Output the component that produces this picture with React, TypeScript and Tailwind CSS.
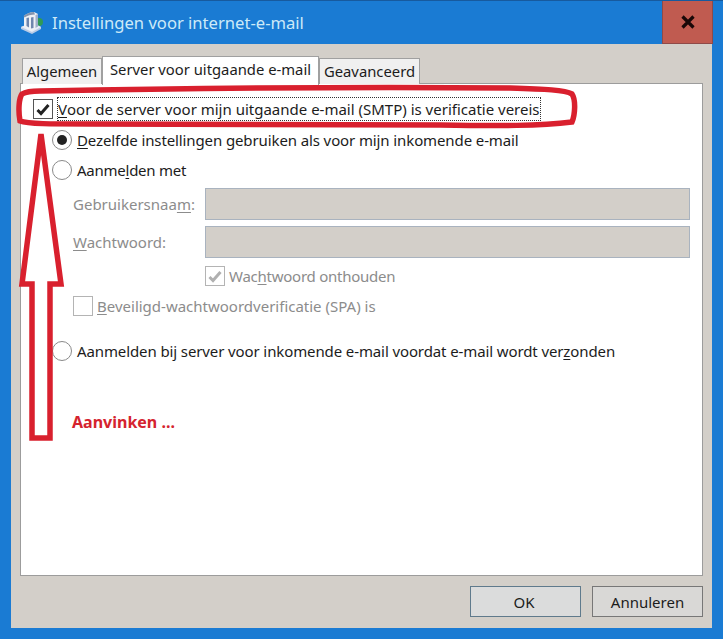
const FONT = "font-['Noto_Sans',sans-serif]"

function Radio({ checked }: { checked?: boolean }) {
    return (
        <span className="w-[20px] h-[20px] rounded-full border border-[#8a8a8a] bg-white flex items-center justify-center shrink-0">
            {checked && <span className="w-[10px] h-[10px] rounded-full bg-[#222]" />}
        </span>
    )
}

function Check({ checked, disabled }: { checked?: boolean; disabled?: boolean }) {
    return (
        <span className={`w-[20px] h-[20px] border flex items-center justify-center shrink-0 ${disabled ? 'border-[#b4b4b4]' : 'border-[#555]'}`}>
            {checked && (
                <svg width="14" height="13" viewBox="0 0 14 13">
                    <path d="M1.5 7 L5 10.5 L12.5 2" fill="none" stroke={disabled ? '#b0b0b0' : '#222'} strokeWidth="3" />
                </svg>
            )}
        </span>
    )
}

function AppIcon() {
    return (
        <svg width="24" height="24" viewBox="0 0 24 24" className="shrink-0">
            <circle cx="19" cy="11" r="4" fill="#2f9a57" />
            <path d="M1 16 L12 11 L21 16 L21 18 L12 23 L1 18 Z" fill="#b9cbe6" />
            <path d="M1 16 L12 21 L21 16 L12 12 Z" fill="#e6ecf6" />
            <path d="M4 5 Q9 1 14 1 L18 3 L18 16 L11 20 L4 16 Z" fill="#eef1f6" />
            <path d="M6.5 7 L9 6.5 L9 16.5 L6.5 15 Z M11 6.5 L13.5 6 L13.5 17 L11 17.5 Z" fill="#6f86ad" />
            <path d="M3.5 5 Q9 1 14 1 L15 3.5 Q9 3.5 4.5 6.5 Z" fill="#8494ad" />
            <path d="M15.5 4 L18 3 L18 15.5 L15.5 17 Z" fill="#9fb0cc" />
        </svg>
    )
}

export default function App() {
    return (
        <div className={`w-[723px] h-[639px] relative overflow-hidden bg-[#1a7bd3] flex flex-col ${FONT}`}>
            {/* ── Title bar ─────────────────────────────── */}
            <div className="h-[44px] shrink-0 flex items-stretch border-t border-[#175a9e]">
                <div className="flex-1 flex items-center pl-[20px] gap-[8px]">
                    <AppIcon />
                    <span className="text-[16.6px] text-[#cdeaf8] leading-none mt-[2px]">Instellingen voor internet-e-mail</span>
                </div>
                <div className="w-[51px] mr-[10px] bg-[#c05b50] border-x border-b border-[#8f4a48] flex items-center justify-center">
                    <svg width="14" height="14" viewBox="0 0 14 14">
                        <path d="M1.5 1.5 L12.5 12.5 M12.5 1.5 L1.5 12.5" stroke="#1a0808" strokeWidth="3.2" />
                    </svg>
                </div>
            </div>

            {/* ── Dialog body ───────────────────────────── */}
            <div className="mx-[11px] h-[584px] bg-[#d3cfc9] px-[9px] flex flex-col text-[15px] text-[#1c1c1c] leading-none">
                {/* tabs */}
                <div className="h-[39px] flex items-end pl-[2px] relative z-10 text-[14.8px]">
                    <div className="w-[80px] h-[26px] -mb-[1px] bg-[#f0f0f0] border border-[#a0a0a0] border-b-0 flex items-center justify-center">Algemeen</div>
                    <div className="w-[217px] h-[29px] -mb-[2px] bg-white border border-[#a0a0a0] border-b-0 flex items-center justify-center pb-[3px]">Server voor uitgaande e-mail</div>
                    <div className="w-[101px] h-[26px] -mb-[1px] bg-[#f0f0f0] border border-[#a0a0a0] border-b-0 flex items-center justify-center">Geavanceerd</div>
                </div>

                {/* panel */}
                <div className="h-[493px] bg-white border border-[#9c9c9c] flex flex-col pt-[13px] overflow-hidden">
                    <div className="h-[24px] flex items-center pl-[12px] gap-[4px]">
                        <Check checked />
                        <span className="h-[24px] flex items-center whitespace-nowrap border border-dotted border-[#333]"><span className="underline underline-offset-2">V</span>oor de server voor mijn uitgaande e-mail (SMTP) is verificatie vereis</span>
                    </div>
                    <div className="h-[24px] mt-[7px] flex items-center pl-[31px] gap-[5px]">
                        <Radio checked />
                        <span className="whitespace-nowrap tracking-[-0.11px]"><span className="underline underline-offset-2">D</span>ezelfde instellingen gebruiken als voor mijn inkomende e-mail</span>
                    </div>
                    <div className="h-[24px] mt-[6px] flex items-center pl-[31px] gap-[5px]">
                        <Radio />
                        <span className="whitespace-nowrap tracking-[-0.25px]">Aanme<span className="underline underline-offset-2">l</span>den met</span>
                    </div>

                    <div className="mt-[6px] pl-[52px] pr-[12px] text-[#8c8c8c] flex flex-col gap-[6px]">
                        <div className="flex items-center">
                            <span className="w-[132px] whitespace-nowrap">Gebruikersnaa<span className="underline underline-offset-2">m</span>:</span>
                            <div className="flex-1 h-[32px] bg-[#d3cfc9] border border-[#a9b3bf]" />
                        </div>
                        <div className="flex items-center">
                            <span className="w-[132px] whitespace-nowrap"><span className="underline underline-offset-2">W</span>achtwoord:</span>
                            <div className="flex-1 h-[32px] bg-[#d3cfc9] border border-[#a9b3bf]" />
                        </div>
                    </div>

                    <div className="h-[24px] mt-[6px] flex items-center pl-[184px] gap-[4px] text-[#8c8c8c]">
                        <Check checked disabled />
                        <span className="whitespace-nowrap tracking-[-0.25px]">Wac<span className="underline underline-offset-2">h</span>twoord onthouden</span>
                    </div>
                    <div className="h-[24px] mt-[6px] flex items-center pl-[52px] gap-[4px] text-[#8c8c8c]">
                        <Check disabled />
                        <span className="whitespace-nowrap">
                            <span className="underline underline-offset-2">B</span>eveiligd-wachtwoordverificatie (SPA) is
                        </span>
                    </div>
                    <div className="h-[24px] mt-[21px] flex items-center pl-[31px] gap-[5px]">
                        <Radio />
                        <span className="whitespace-nowrap tracking-[-0.11px]">Aanmelden bij server voor inkomende e-mail voordat e-mail wordt ver<span className="underline underline-offset-2">z</span>onden</span>
                    </div>
                    <div className="mt-[51px] pl-[51px] text-[16px] font-bold text-[#d5232e] whitespace-nowrap">Aanvinken ...</div>
                </div>

                {/* buttons */}
                <div className="flex justify-end gap-[11px] mt-[10px]">
                    <button className="w-[111px] h-[31px] bg-[#dbdcdc] border border-[#5f7a8c] pr-[3px] pt-[1px]">OK</button>
                    <button className="w-[111px] h-[31px] bg-[#d9d8d6] border border-[#777] pt-[1px]">Annuleren</button>
                </div>
            </div>

            {/* ── Red annotation drawn over the dialog ──── */}
            <svg width="723" height="639" viewBox="0 0 723 639" className="absolute inset-0 pointer-events-none" fill="none" stroke="#d9202e" strokeWidth="5.5">
                <path d="M40 91 C200 88 400 87 510 88 C545 89 565 90 572 94 C576 100 575 115 572 122 C540 126 500 126 440 125 C300 124 160 125 90 124 C50 124 28 124 20 121 C18 110 19 98 22 94 C27 91 33 91 40 91 Z" />
                <path d="M41 134 L22 284 L32 284 L32 438 L50 438 L50 284 L61 284 Z" strokeLinejoin="miter" />
            </svg>
        </div>
    )
}
